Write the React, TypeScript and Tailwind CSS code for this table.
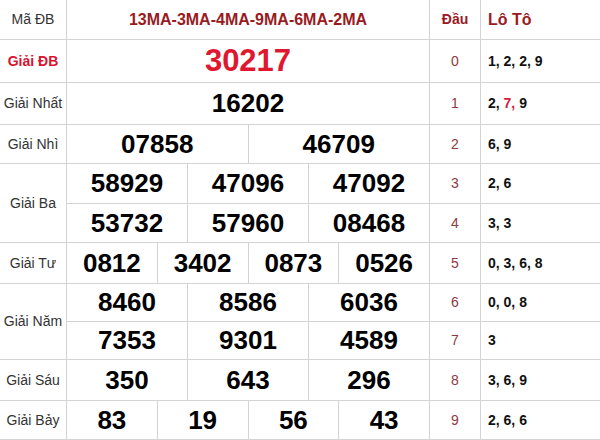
import React from 'react';

type Row = { label?: string; span?: number; red?: boolean; nums: string[]; big?: boolean };

const rows: Row[] = [
  { label: 'Giải ĐB', red: true, nums: ['30217'], big: true },
  { label: 'Giải Nhất', nums: ['16202'] },
  { label: 'Giải Nhì', nums: ['07858', '46709'] },
  { label: 'Giải Ba', span: 2, nums: ['58929', '47096', '47092'] },
  { nums: ['53732', '57960', '08468'] },
  { label: 'Giải Tư', nums: ['0812', '3402', '0873', '0526'] },
  { label: 'Giải Năm', span: 2, nums: ['8460', '8586', '6036'] },
  { nums: ['7353', '9301', '4589'] },
  { label: 'Giải Sáu', nums: ['350', '643', '296'] },
  { label: 'Giải Bảy', nums: ['83', '19', '56', '43'] },
];

const loto: React.ReactNode[] = [
  '1, 2, 2, 9',
  <span>2, <span className="text-[#d21f3c]">7,</span> 9</span>,
  '6, 9',
  '2, 6',
  '3, 3',
  '0, 3, 6, 8',
  '0, 0, 8',
  '3',
  '3, 6, 9',
  '2, 6, 6',
];

export default function App() {
  return (
    <div className="w-[600px] h-[440px] bg-white font-['Liberation_Sans',Arial,sans-serif]">
      <div className="grid grid-cols-[66px_362px_50px_119px] grid-rows-[39px_42px_41px_38px_39px_38px_40px_37px_37px_40px_38px] gap-px bg-[#d3d3d3] border-b border-[#d3d3d3]">
        {/* header */}
        <div className="bg-white flex items-center justify-center text-[14px] text-[#333]">Mã ĐB</div>
        <div className="bg-white flex items-center justify-center text-[16px] font-bold text-[#9a1b1f]">
          13MA-3MA-4MA-9MA-6MA-2MA
        </div>
        <div className="bg-white flex items-center justify-center text-[14px] font-bold text-[#9a1b1f]">Đầu</div>
        <div className="bg-white flex items-center pl-[7px] text-[16px] font-bold text-[#9a1b1f]">Lô Tô</div>

        {rows.map((r, i) => (
          <React.Fragment key={i}>
            {r.label && (
              <div
                style={{ gridColumn: 1, gridRow: `${i + 2} / span ${r.span ?? 1}` }}
                className={`bg-white flex items-center justify-center text-[14px] ${
                  r.red ? 'font-bold text-[#d8142f]' : 'text-[#333]'
                }`}
              >
                {r.label}
              </div>
            )}
            <div style={{ gridColumn: 2, gridRow: i + 2 }} className="flex gap-px">
              {r.nums.map((n, j) => (
                <div
                  key={j}
                  className={`flex-1 bg-white flex items-center justify-center font-bold ${
                    r.big ? 'text-[31px] text-[#e0182f]' : 'text-[26px] text-black'
                  }`}
                >
                  {n}
                </div>
              ))}
            </div>
            <div
              style={{ gridColumn: 3, gridRow: i + 2 }}
              className="bg-white flex items-center justify-center text-[14px] text-[#8e3a42]"
            >
              {i}
            </div>
            <div
              style={{ gridColumn: 4, gridRow: i + 2 }}
              className="bg-white flex items-center pl-[7px] text-[14px] font-bold text-[#111]"
            >
              {loto[i]}
            </div>
          </React.Fragment>
        ))}
      </div>
    </div>
  );
}
